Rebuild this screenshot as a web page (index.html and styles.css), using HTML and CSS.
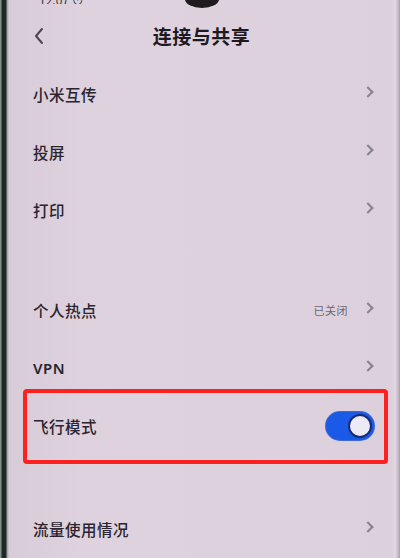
FILE: index.html
```html
<!DOCTYPE html>
<html lang="zh">
<head>
<meta charset="utf-8">
<link rel="stylesheet" href="styles.css">
</head>
<body>
<div class="phone">
  <div class="bezel"></div>
  <div class="screen">
    <div class="camera"></div>
    <div class="status"><span>12:07 ⊙</span></div>
    <div class="header">
      <svg class="back" width="12" height="18" viewBox="0 0 12 18"><path d="M9 2 L3 9 L9 16" fill="none" stroke="#4a4450" stroke-width="2" stroke-linecap="round" stroke-linejoin="round"/></svg>
      <div class="title">连接与共享</div>
    </div>
    <div class="row"><span class="label">小米互传</span><span class="chev"></span></div>
    <div class="row"><span class="label">投屏</span><span class="chev"></span></div>
    <div class="row"><span class="label">打印</span><span class="chev"></span></div>
    <div class="gap"></div>
    <div class="row"><span class="label">个人热点</span><span class="value">已关闭</span><span class="chev"></span></div>
    <div class="row"><span class="label latin">VPN</span><span class="chev"></span></div>
    <div class="row highlight">
      <span class="label">飞行模式</span>
      <span class="toggle"><span class="knob"></span></span>
      <span class="mark"></span>
    </div>
    <div class="gap2"></div>
    <div class="row"><span class="label">流量使用情况</span><span class="chev"></span></div>
  </div>
  <div class="edge"></div>
</div>
</body>
</html>
```
FILE: styles.css
```css
html, body {
  margin: 0;
  padding: 0;
  width: 400px;
  height: 558px;
  overflow: hidden;
  background: #dcd1dc;
  font-family: "Noto Sans CJK SC", "Noto Sans", sans-serif;
}
.phone {
  display: flex;
  width: 400px;
  height: 558px;
}
.bezel {
  width: 9px;
  flex: none;
  background: linear-gradient(90deg, #8a8a8a 0, #8a8a8a 1px, #1c2a26 2px, #1c2a26 6px, #a49aa6 7px, #d4c8d4 9px);
}
.edge {
  width: 8px;
  flex: none;
  background: linear-gradient(90deg, #dcd0dc 0, #e4d8e4 3px, #c8bcc8 6px, #a89ca8 8px);
}
.screen {
  flex: 1;
  position: relative;
  background: linear-gradient(90deg, #d8ccd8 0, #ddd2de 20%, #dcd1dc 80%, #dbd0dc 100%);
  padding: 0 16px 0 24px;
  display: flex;
  flex-direction: column;
}
.camera {
  position: absolute;
  left: 176px;
  top: -10px;
  width: 34px;
  height: 18px;
  border-radius: 50%;
  background: #1e1a1e;
}
.status {
  height: 4px;
  overflow: hidden;
  display: flex;
  align-items: flex-end;
  padding-left: 6px;
  font-size: 12px;
  color: #3a3440;
  line-height: 8px;
}
.header {
  display: flex;
  align-items: center;
  position: relative;
  box-sizing: border-box;
  margin-top: -4px;
  padding-top: 6px;
  height: 65px;
}
.title {
  position: absolute;
  left: 0;
  right: 0;
  top: 6px;
  bottom: 0;
  display: flex;
  align-items: center;
  justify-content: center;
  font-size: 19px;
  font-weight: 700;
  color: #1e1a22;
  letter-spacing: 0.5px;
  padding-right: 6px;
}
.row {
  height: 58px;
  display: flex;
  align-items: center;
  position: relative;
}
.label {
  flex: 1;
  font-size: 15.5px;
  font-weight: 500;
  color: #2a2430;
  letter-spacing: 0.5px;
}
.latin {
  font-family: "Noto Sans", "Roboto", sans-serif;
  font-weight: 600;
  font-size: 15px;
}
.value {
  font-size: 11px;
  color: #6e6874;
  margin-right: 16px;
  letter-spacing: 0.5px;
}
.chev {
  width: 6px;
  height: 6px;
  border-top: 2px solid #8a8290;
  border-right: 2px solid #8a8290;
  transform: rotate(45deg);
  margin-right: 4px;
  margin-top: -4px;
}
.gap { height: 42px; }
.gap2 { height: 45px; }
.toggle {
  width: 48px;
  height: 28px;
  border-radius: 14px;
  background: #1a5ae6;
  display: flex;
  align-items: center;
  justify-content: flex-end;
  padding: 0 2px;
  box-sizing: border-box;
  margin-right: 2px;
  margin-top: -1px;
  box-shadow: 0 0 0 1px #3a6ad8;
}
.knob {
  width: 20px;
  height: 20px;
  border-radius: 50%;
  background: #eceaf4;
  border: 2px solid #182a7a;
}
.mark {
  position: absolute;
  left: -10px;
  right: -12px;
  top: -8px;
  bottom: -9px;
  border: 4px solid #ff2020;
  border-radius: 4px;
  pointer-events: none;
}
```
